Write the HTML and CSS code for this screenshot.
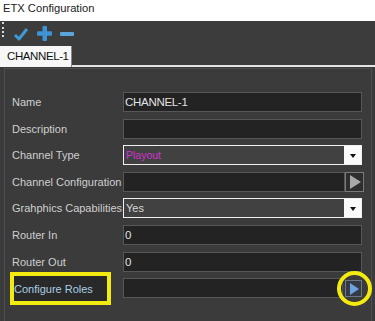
FILE: index.html
```html
<!DOCTYPE html>
<html lang="en">
<head>
    <meta charset="UTF-8">
    <title>ETX Configuration</title>
    <link rel="stylesheet" href="styles.css">
</head>
<body>
    <div class="title">ETX Configuration</div>

    <!-- 工具栏 -->
    <div class="toolbar">
        <span class="grip"></span>
        <svg class="tool" width="16" height="14" viewBox="0 0 16 14">
            <path d="M2 8 L6 12 L14 2" fill="none" stroke="#3f9ad6" stroke-width="3" stroke-linejoin="round"/>
        </svg>
        <svg class="tool" width="15" height="15" viewBox="0 0 15 15">
            <rect x="5.5" y="0" width="4.5" height="15" rx="1" fill="#3d93d4"/>
            <rect x="0" y="5.3" width="15" height="4.5" rx="1" fill="#3d93d4"/>
        </svg>
        <svg class="tool" width="14" height="4" viewBox="0 0 14 4">
            <rect x="0" y="0" width="14" height="4" rx="1" fill="#5aa6dc"/>
        </svg>
    </div>

    <!-- 标签页 -->
    <div class="tabs">
        <div class="tab">CHANNEL-1</div>
    </div>

    <div class="panel">
        <div class="frame">
            <label class="label">Name</label>
            <div class="field text">CHANNEL-1</div>

            <label class="label">Description</label>
            <div class="field text"></div>

            <label class="label">Channel Type</label>
            <div class="field select playout">Playout<span class="drop"><i></i></span></div>

            <label class="label">Channel Configuration</label>
            <div class="field combo">
                <div class="text"></div>
                <span class="go"><i></i></span>
            </div>

            <label class="label">Grahphics Capabilities</label>
            <div class="field select">Yes<span class="drop"><i></i></span></div>

            <label class="label">Router In</label>
            <div class="field text">0</div>

            <label class="label">Router Out</label>
            <div class="field text">0</div>

            <label class="label hl">Configure Roles</label>
            <div class="field combo">
                <div class="text roles"></div>
                <span class="go blue"><i></i></span>
            </div>
        </div>
    </div>
</body>
</html>
```

FILE: styles.css
```css
/* 基本页面 */
body {
    margin: 0;
    background: #fff;
    font-family: "Liberation Sans", Arial, sans-serif;
    font-size: 11px;
}

/* 窗口标题 */
.title {
    height: 21px;
    padding: 2px 0 0 3px;
    box-sizing: border-box;
    color: #222;
    font-size: 11.2px;
}

/* 工具栏 */
.toolbar {
    height: 25px;
    background: #3c3c3c;
    display: flex;
    align-items: center;
    padding-left: 2px;
}

.grip {
    width: 0;
    height: 15px;
    border-left: 2px dotted #d8d8d8;
    margin-right: 9px;
    margin-top: -8px;
}

.tool {
    margin-right: 8px;
}

/* 标签页 */
.tabs {
    height: 19px;
    background: #3c3c3c;
    border-bottom: 2px solid #e4e4e4;
    display: flex;
}

.tab {
    width: 72px;
    height: 21px;
    box-sizing: border-box;
    background: #f7f7f7;
    border-right: 1px solid #888;
    color: #111;
    padding: 4px 0 0 7px;
    letter-spacing: -0.4px;
    font-size: 11.5px;
}

/* 面板 */
.panel {
    background: #3b3b3b;
    padding: 1px 3px 0 4px;
    height: 260px;
}

.frame {
    border: 1px solid #4e4e4e;
    border-bottom: none;
    height: 100%;
    box-sizing: border-box;
    padding: 23px 0 0 7px;
    display: grid;
    grid-template-columns: 111px 239px;
    grid-auto-rows: 20px;
    row-gap: 6.6px;
    align-content: start;
}

.label {
    color: #cfcfcf;
    display: flex;
    align-items: center;
    white-space: nowrap;
    font-size: 11px;
}

/* 高亮框 */
.label.hl {
    margin: -6px 12px -7px -2px;
    border: 4px solid #f3ea10;
    background: #292929;
    color: #a9cfe6;
    padding-left: 0;
}

.field {
    box-sizing: border-box;
    height: 20px;
}

.text {
    height: 20px;
    box-sizing: border-box;
    background: #232323;
    border: 1px solid #575757;
    color: #e2e2e2;
    padding: 3px 0 0 1px;
    font-size: 11.5px;
    letter-spacing: -0.3px;
}

.select {
    position: relative;
    background: #414141;
    border: 1px solid #f0f0f0;
    color: #d8d8d8;
    padding: 3px 0 0 2px;
    font-size: 11px;
}

.playout {
    color: #d232d2;
    font-size: 10.5px;
}

.drop {
    position: absolute;
    right: 0;
    top: 0;
    bottom: 0;
    width: 17px;
    background: #fafafa;
    display: flex;
    align-items: center;
    justify-content: center;
}

.drop i {
    border-left: 3px solid transparent;
    border-right: 3px solid transparent;
    border-top: 4px solid #111;
    margin-top: 1px;
}

.combo {
    display: flex;
}

.combo .text {
    flex: 1;
}

.go {
    width: 19px;
    height: 20px;
    box-sizing: border-box;
    border: 1px solid #7a7a7a;
    background: #2e2e2e;
    display: flex;
    align-items: center;
    justify-content: center;
    margin-right: -2px;
}

.go i {
    border-top: 7px solid transparent;
    border-bottom: 7px solid transparent;
    border-left: 11px solid #a8a8a8;
    margin-left: 2px;
}

.roles {
    margin-right: 2px;
}

.go.blue {
    position: relative;
    width: 17px;
    height: 17px;
    margin: 2px 0 0 0;
    border-color: #6d7686;
    background: #333a44;
}

.go.blue i {
    border-top-width: 6px;
    border-bottom-width: 6px;
    border-left: 9px solid #6fa0e0;
    margin-left: 1px;
}

/* 黄色圆圈标注 */
.go.blue::after {
    content: "";
    position: absolute;
    left: -9px;
    top: -10px;
    width: 27px;
    height: 27px;
    border: 4px solid #f3ea10;
    border-radius: 50%;
}
```
